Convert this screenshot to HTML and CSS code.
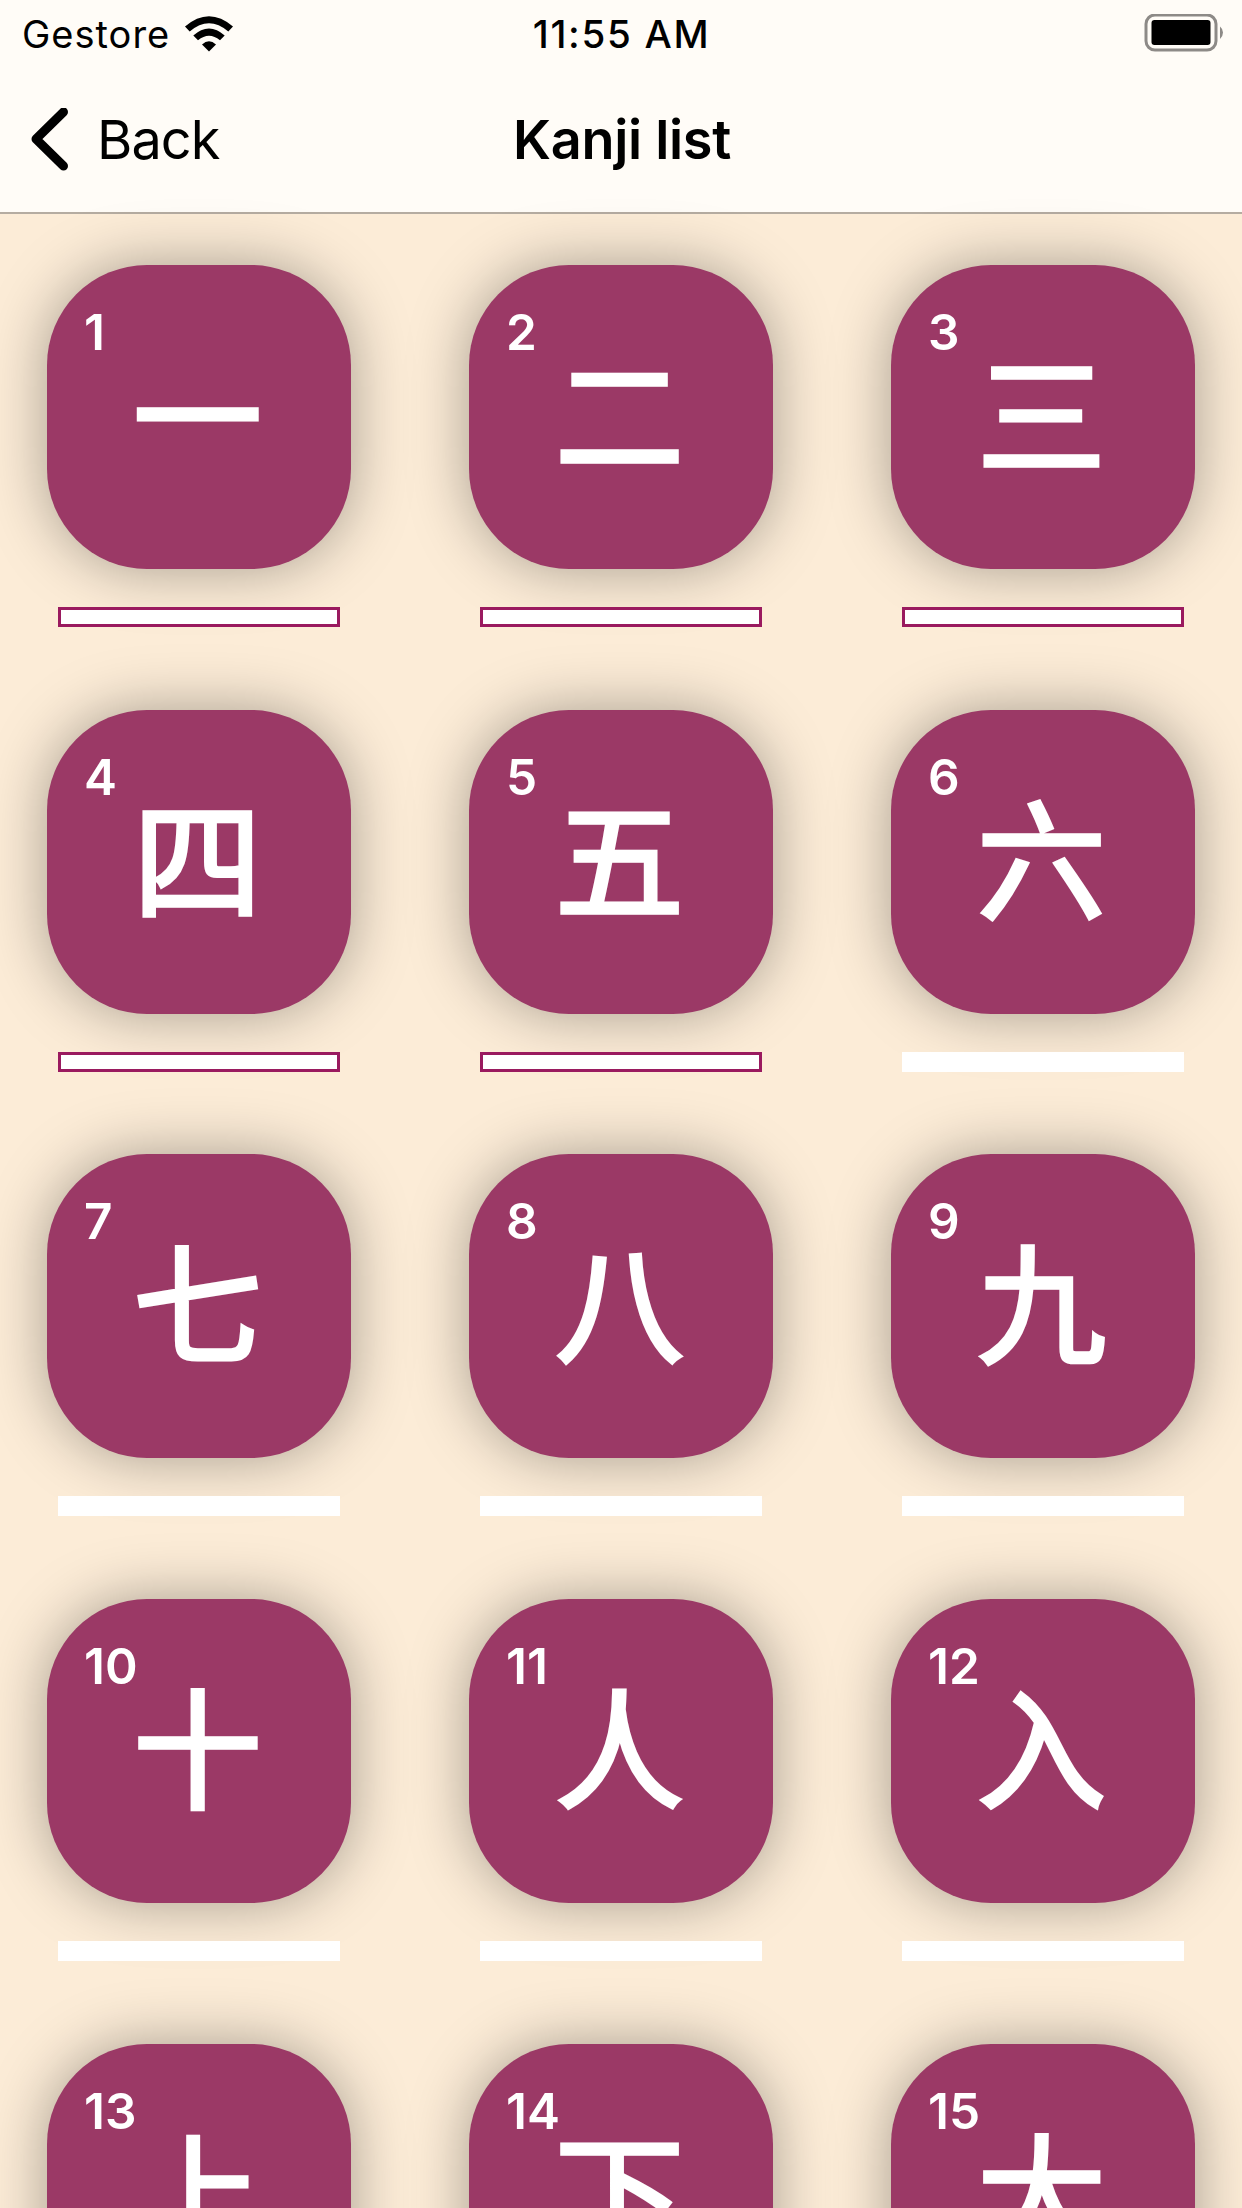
FILE: index.html
```html
<!DOCTYPE html>
<html lang="en">
<head>
<meta charset="utf-8">
<title>Kanji list</title>
<link rel="stylesheet" href="styles.css">
</head>
<body>
<header class="header">
  <div class="status">
    <div class="carrier">
      <span>Gestore</span>
      <svg class="wifi" width="50" height="38" viewBox="0 0 50 38">
        <path d="M1 11.5Q25-9 49 11.5L44.3 16.5Q25 0 5.700 16.500Z"/>
        <path d="M9.300 20.500Q25 6.500 40.700 20.500L36 25.300Q25 16 14 25.300Z"/>
        <path d="M18 29.500Q25 23 32 29.500L25 36.500Z"/>
      </svg>
    </div>
    <span class="time">11:55 AM</span>
    <svg class="battery" width="80" height="40" viewBox="0 0 80 40">
      <rect class="shell" x="2" y="1" width="70" height="35" rx="9"/>
      <rect x="7.500" y="6" width="59" height="25" rx="3"/>
      <path class="cap" d="M76 12.500Q79 15 79 18.500T76 25Z"/>
    </svg>
  </div>
  <nav class="nav">
    <a class="back"><svg class="chevron" width="38" height="64" viewBox="0 0 38 64"><path d="M33.500 4L6 31L33.500 58"/></svg><span>Back</span></a>
    <h1 class="title">Kanji list</h1>
    <span></span>
  </nav>
</header>
<main class="grid">
  <div class="cell"><div class="tile"><span class="num">1</span><span class="kanji">一</span></div><div class="bar started"></div></div>
  <div class="cell"><div class="tile"><span class="num">2</span><span class="kanji">二</span></div><div class="bar started"></div></div>
  <div class="cell"><div class="tile"><span class="num">3</span><span class="kanji">三</span></div><div class="bar started"></div></div>
  <div class="cell"><div class="tile"><span class="num">4</span><span class="kanji">四</span></div><div class="bar started"></div></div>
  <div class="cell"><div class="tile"><span class="num">5</span><span class="kanji jp">五</span></div><div class="bar started"></div></div>
  <div class="cell"><div class="tile"><span class="num">6</span><span class="kanji">六</span></div><div class="bar"></div></div>
  <div class="cell"><div class="tile"><span class="num">7</span><span class="kanji">七</span></div><div class="bar"></div></div>
  <div class="cell"><div class="tile"><span class="num">8</span><span class="kanji">八</span></div><div class="bar"></div></div>
  <div class="cell"><div class="tile"><span class="num">9</span><span class="kanji">九</span></div><div class="bar"></div></div>
  <div class="cell"><div class="tile"><span class="num">10</span><span class="kanji">十</span></div><div class="bar"></div></div>
  <div class="cell"><div class="tile"><span class="num">11</span><span class="kanji">人</span></div><div class="bar"></div></div>
  <div class="cell"><div class="tile"><span class="num">12</span><span class="kanji">入</span></div><div class="bar"></div></div>
  <div class="cell"><div class="tile"><span class="num">13</span><span class="kanji">上</span></div><div class="bar"></div></div>
  <div class="cell"><div class="tile"><span class="num">14</span><span class="kanji">下</span></div><div class="bar"></div></div>
  <div class="cell"><div class="tile"><span class="num">15</span><span class="kanji">大</span></div><div class="bar"></div></div>
</main>
</body>
</html>
```
FILE: styles.css
```css
* { box-sizing: border-box; }
body {
  margin: 0;
  height: 2208px;
  overflow: hidden;
  display: flex;
  flex-direction: column;
  background: #fcecd7;
  font-family: Inter, "Liberation Sans", sans-serif;
  color: #000;
}
.header {
  flex: none;
  height: 214px;
  background: #fffcf7;
  border-bottom: 2px solid #b5aca1;
}
.status {
  height: 67px;
  padding: 0 18px 0 22px;
  display: grid;
  grid-template-columns: 1fr auto 1fr;
  align-items: center;
}
.carrier { display: flex; align-items: center; gap: 14px; font-size: 38px; letter-spacing: 1px; }
.time { margin-right: 3px; font-size: 38.500px; font-weight: 550; letter-spacing: 1.700px; }
.battery { justify-self: end; }
.shell { fill: none; stroke: #8d8a87; stroke-width: 3; }
.cap { fill: #8d8a87; }
.nav {
  height: 145px;
  padding: 0 30px;
  display: grid;
  grid-template-columns: 1fr auto 1fr;
  align-items: center;
}
.back { display: flex; align-items: center; gap: 29px; font-size: 54px; letter-spacing: -.900px; }
.chevron path { fill: none; stroke: #000; stroke-width: 9; stroke-linecap: round; stroke-linejoin: round; }
.title { margin: 0 0 0 2px; font-size: 54px; font-weight: 600; letter-spacing: -.300px; }
.grid {
  flex: none;
  padding: 51px 47px 0;
  display: grid;
  grid-template-columns: repeat(3, 304px);
  grid-auto-rows: 362px;
  justify-content: space-between;
  row-gap: 82.700px;
}
.cell { display: flex; flex-direction: column; align-items: center; gap: 38px; }
.tile {
  width: 304px;
  height: 304px;
  padding: 37px 37px 0;
  border-radius: 100px;
  background: #9b3966;
  box-shadow: 0 0 60px rgba(0, 0, 0, .34);
  color: #fff;
  display: flex;
  flex-direction: column;
}
.num { font-size: 49.500px; line-height: 60px; font-weight: 600; }
.kanji {
  align-self: center;
  margin: -19px 3px 0 0;
  font-family: "Noto Sans CJK SC", sans-serif;
  font-size: 129px;
  line-height: 132px;
  font-weight: 400;
  -webkit-text-stroke: 3.700px #fff;
}
.jp { font-family: "Noto Sans CJK JP", sans-serif; }
.bar { width: 282px; height: 20px; background: #fff; }
.started { border: 3px solid #9a1a5f; }
```
